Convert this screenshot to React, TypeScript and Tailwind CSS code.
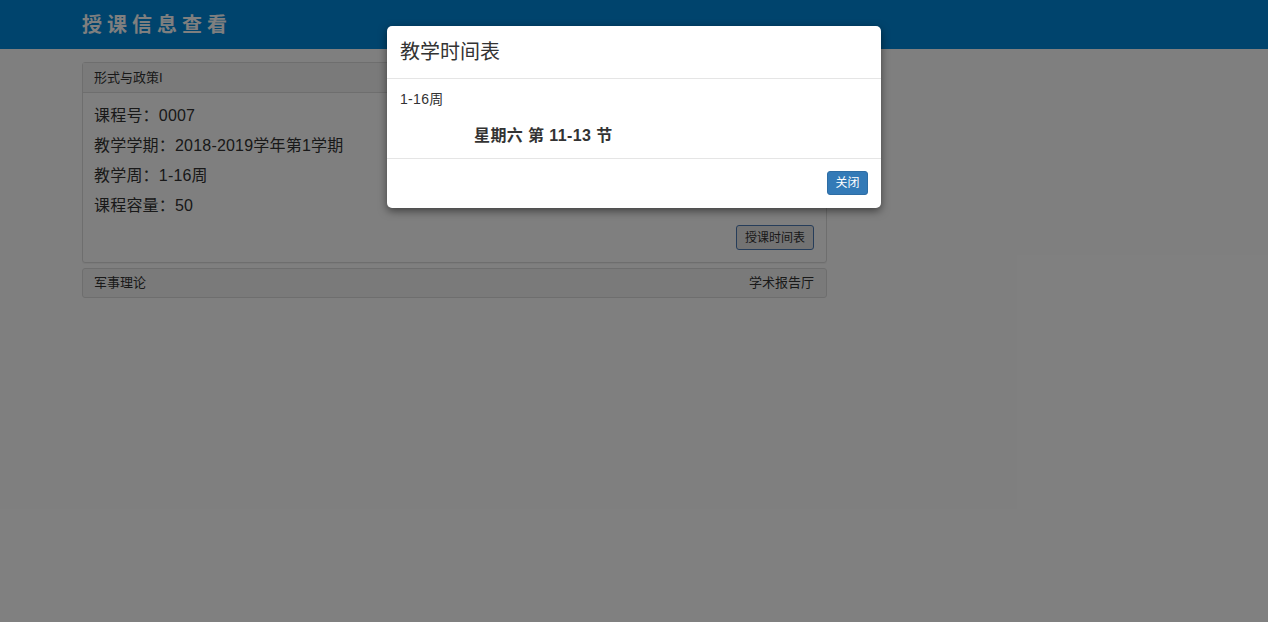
import React from "react";

const font = { fontFamily: '"Liberation Sans", "Noto Sans CJK SC", Arial, sans-serif' };

export default function App() {
  return (
    <div className="relative min-h-[622px] bg-white text-[#333]" style={font}>
      <div className="h-[49px] bg-[#0088da] flex items-center">
        <div className="ml-[82px] mt-[1px] text-[20px] font-bold tracking-[5px] text-white">授课信息查看</div>
      </div>
      <div className="ml-[82px] w-[745px] mt-[13px] flex flex-col gap-[5px]">
        <div className="border border-[#ddd] rounded-[3px] shadow-[0_1px_1px_rgba(0,0,0,0.05)]">
          <div className="h-[30px] bg-[#f5f5f5] border-b border-[#ddd] pl-[11px] pr-[12px] flex items-center text-[13px]">形式与政策I</div>
          <div className="pt-[8px] pb-[12px] pl-[11px] pr-[12px]">
            <div className="text-[16px] leading-[30px] tracking-[0.2px]">课程号：0007</div>
            <div className="text-[16px] leading-[30px] tracking-[0.2px]">教学学期：2018-2019学年第1学期</div>
            <div className="text-[16px] leading-[30px] tracking-[0.2px]">教学周：1-16周</div>
            <div className="text-[16px] leading-[30px] tracking-[0.2px]">课程容量：50</div>
            <div className="flex justify-end mt-[4px]">
              <button className="h-[25px] px-[8px] text-[12px] bg-[#e6e6e6] border border-[#4d7bb5] rounded-[3px] text-[#333]">授课时间表</button>
            </div>
          </div>
        </div>
        <div className="h-[30px] bg-[#f5f5f5] border border-[#ddd] rounded-[3px] pl-[11px] pr-[12px] flex items-center justify-between text-[13px]">
          <span>军事理论</span>
          <span>学术报告厅</span>
        </div>
      </div>

      <div className="absolute inset-0 bg-black/50" />

      <div className="absolute left-[387px] top-[26px] w-[494px] bg-white rounded-[5px] shadow-[0_3px_9px_rgba(0,0,0,0.5)]">
        <div className="px-[13px] pt-[15px] pb-[15px] border-b border-[#e5e5e5]">
          <div className="text-[20px] leading-[22px]">教学时间表</div>
        </div>
        <div className="px-[13px] pt-[10px] pb-[12px]">
          <div className="text-[14px] leading-[20px] tracking-[0.3px]">1-16周</div>
          <div className="mt-[17px] pl-[74px] text-[16px] leading-[20px] font-bold tracking-[0.4px]">星期六 第 11-13 节</div>
        </div>
        <div className="border-t border-[#e5e5e5] px-[13px] pt-[12px] pb-[13px] flex justify-end">
          <button className="h-[24px] w-[41px] bg-[#337ab7] border border-[#2e6da4] rounded-[3px] text-white text-[12px]">关闭</button>
        </div>
      </div>
    </div>
  );
}
